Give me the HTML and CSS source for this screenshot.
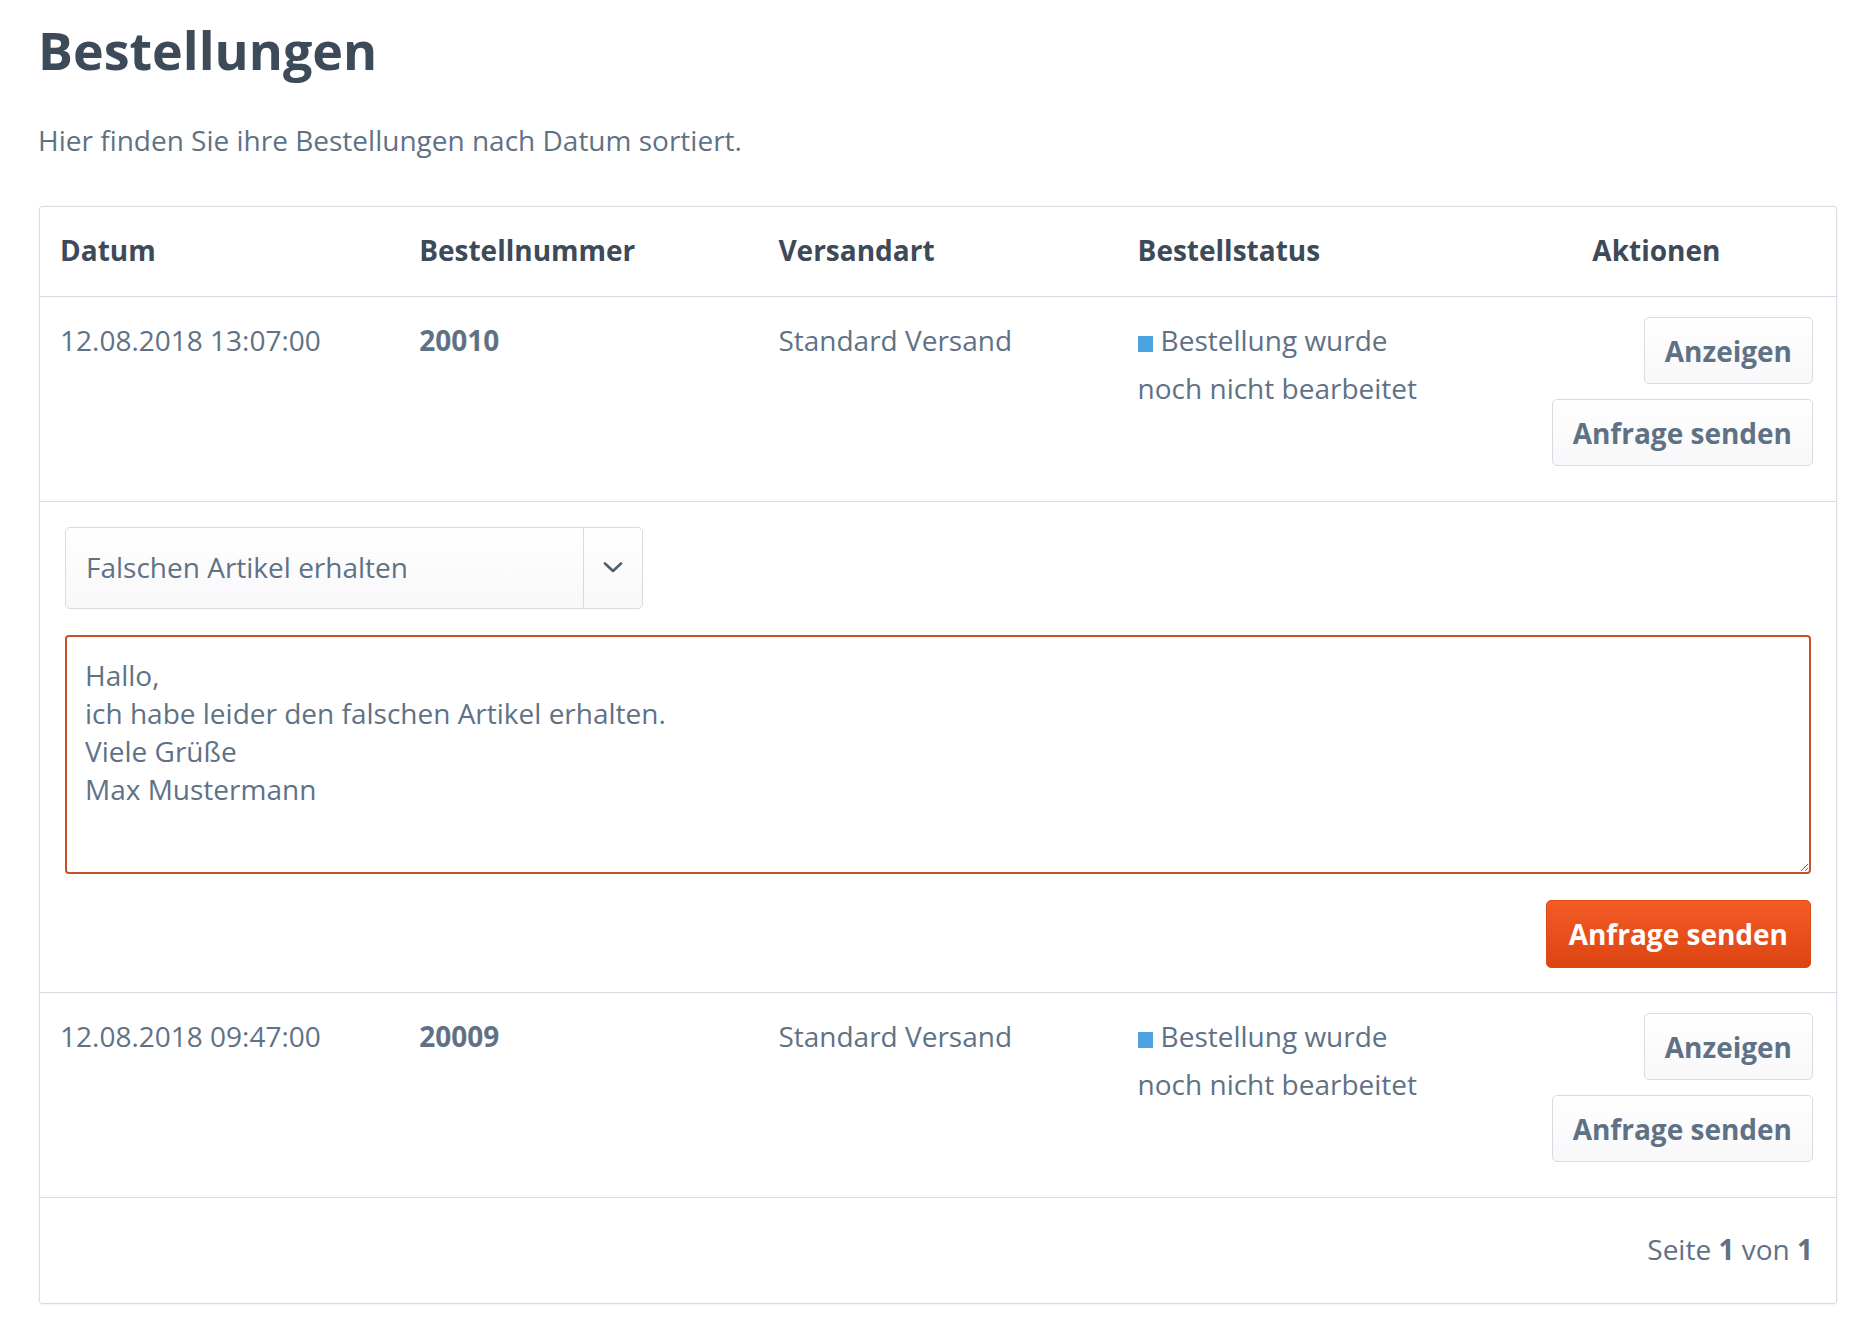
FILE: index.html
```html
<!DOCTYPE html>
<html lang="de">
<head>
<meta charset="utf-8">
<title>Bestellungen</title>
<link rel="stylesheet" href="styles.css">
</head>
<body>
<div class="page">
  <h1 class="title">Bestellungen</h1>
  <p class="intro">Hier finden Sie ihre Bestellungen nach Datum sortiert.</p>

  <div class="panel">
    <div class="row head">
      <div class="cell">Datum</div>
      <div class="cell">Bestellnummer</div>
      <div class="cell">Versandart</div>
      <div class="cell">Bestellstatus</div>
      <div class="cell center">Aktionen</div>
    </div>

    <div class="row order">
      <div class="cell">12.08.2018 13:07:00</div>
      <div class="cell strong">20010</div>
      <div class="cell">Standard Versand</div>
      <div class="cell"><span class="status"></span>Bestellung wurde<br>noch nicht bearbeitet</div>
      <div class="cell actions">
        <button class="btn">Anzeigen</button>
        <button class="btn">Anfrage senden</button>
      </div>
    </div>

    <div class="request">
      <div class="select">
        <span class="select-text">Falschen Artikel erhalten</span>
        <span class="select-arrow">
          <svg width="20" height="11" viewBox="0 0 20 11"><path d="M2 1.5 L10 9 L18 1.5" fill="none" stroke="#4f5f70" stroke-width="2.6" stroke-linecap="round" stroke-linejoin="round"/></svg>
        </span>
      </div>
      <textarea class="message">Hallo,
ich habe leider den falschen Artikel erhalten.
Viele Grüße
Max Mustermann</textarea>
      <div class="submit-row">
        <button class="btn primary">Anfrage senden</button>
      </div>
    </div>

    <div class="row order">
      <div class="cell">12.08.2018 09:47:00</div>
      <div class="cell strong">20009</div>
      <div class="cell">Standard Versand</div>
      <div class="cell"><span class="status"></span>Bestellung wurde<br>noch nicht bearbeitet</div>
      <div class="cell actions">
        <button class="btn">Anzeigen</button>
        <button class="btn">Anfrage senden</button>
      </div>
    </div>

    <div class="footer">Seite <strong>1</strong> von <strong>1</strong></div>
  </div>
</div>
</body>
</html>
```

FILE: styles.css
```css
* { box-sizing: border-box; }

html, body {
  margin: 0;
  padding: 0;
  background: #ffffff;
}

body {
  font-family: "Open Sans", "Liberation Sans", sans-serif;
  font-size: 28px;
  line-height: 48px;
  color: #5f7285;
}

.page {
  padding: 20px 34px 40px 38px;
}

.title {
  margin: 0;
  font-size: 52px;
  line-height: 60px;
  font-weight: 700;
  color: #3d4a58;
}

.intro {
  margin: 36px 0 42px 0;
}

.panel {
  margin-left: 1px;
  border: 1px solid #dadae5;
  border-radius: 3px;
  box-shadow: 0 1px 3px rgba(0, 0, 0, 0.06);
}

.row {
  display: grid;
  grid-template-columns: repeat(5, 1fr);
}

.head {
  color: #3d4a58;
  font-weight: 700;
}

.head .cell {
  padding: 19px 20px 22px 20px;
}

.order {
  border-top: 1px solid #dadae5;
}

.order .cell {
  padding: 19px 20px 21px 20px;
}

.cell.center { text-align: center; }

.cell.strong { font-weight: 700; }

.status {
  display: inline-block;
  width: 15px;
  height: 16px;
  background: #4aa3df;
  margin-right: 8px;
  vertical-align: -1px;
}

.order .cell.actions {
  display: flex;
  flex-direction: column;
  align-items: flex-end;
  gap: 15px;
  padding: 20px 23px 35px 0;
}

.btn {
  font-family: inherit;
  font-size: 28px;
  font-weight: 700;
  line-height: 1;
  height: 67px;
  padding: 0 20px;
  color: #5f7285;
  background: linear-gradient(#ffffff, #f8f8fa);
  border: 1px solid #dadae5;
  border-radius: 5px;
  cursor: pointer;
}

.btn.primary {
  height: 68px;
  color: #ffffff;
  background: linear-gradient(#f35c27, #dc4412);
  border: 1px solid #dc4a16;
  padding: 0 22px;
}

.request {
  border-top: 1px solid #dadae5;
  padding: 25px 25px 24px 25px;
  display: flex;
  flex-direction: column;
}

.select {
  display: flex;
  width: 578px;
  height: 82px;
  border: 1px solid #dadae5;
  border-radius: 5px;
  background: linear-gradient(#ffffff, #f8f8fa);
}

.select-text {
  flex: 1;
  padding-left: 20px;
  line-height: 78px;
}

.select-arrow {
  width: 59px;
  border-left: 1px solid #dadae5;
  display: flex;
  align-items: center;
  justify-content: center;
}

.select-arrow svg { display: block; margin-top: -2px; }

.message {
  display: block;
  margin-top: 26px;
  width: 100%;
  height: 239px;
  padding: 19px 18px;
  font-family: inherit;
  font-size: 28px;
  line-height: 38px;
  color: #5f7285;
  border: 2px solid #c9502a;
  border-radius: 4px;
  background: #ffffff;
  outline: none;
}

.submit-row {
  display: flex;
  justify-content: flex-end;
  margin-top: 26px;
}

.footer {
  border-top: 1px solid #dadae5;
  text-align: right;
  padding: 27px 23px 30px 20px;
}

.footer strong { font-weight: 700; }
```
